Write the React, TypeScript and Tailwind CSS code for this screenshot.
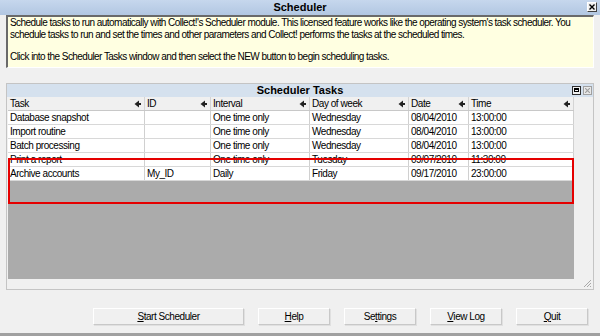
import React from 'react';

const columns = [
  { title: 'Task', w: 'w-[137px]' },
  { title: 'ID', w: 'w-[66px]' },
  { title: 'Interval', w: 'w-[99px]' },
  { title: 'Day of week', w: 'w-[99px]' },
  { title: 'Date', w: 'w-[60px]' },
  { title: 'Time', w: 'w-[105px]' },
];

const rows = [
  ['Database snapshot', '', 'One time only', 'Wednesday', '08/04/2010', '13:00:00'],
  ['Import routine', '', 'One time only', 'Wednesday', '08/04/2010', '13:00:00'],
  ['Batch processing', '', 'One time only', 'Wednesday', '08/04/2010', '13:00:00'],
  ['Print a report', '', 'One time only', 'Tuesday', '09/07/2010', '11:30:00'],
  ['Archive accounts', 'My_ID', 'Daily', 'Friday', '09/17/2010', '23:00:00'],
];

function SortArrow() {
  return (
    <svg width="9" height="8" viewBox="0 0 9 8" className="shrink-0">
      <polygon points="6,0.5 6,7.5 1.5,4" fill="#222" />
      <rect x="6" y="3" width="2" height="2" fill="#222" />
    </svg>
  );
}

function Btn({ children, w = 'w-[72px]' }: { children: React.ReactNode; w?: string }) {
  return (
    <button
      className={`${w} h-[17px] flex items-center justify-center bg-[#f0f0f0] border border-t-white border-l-white border-r-[#c8c8c8] border-b-[#c8c8c8] shadow-[1px_1px_0_#e0e0e0] leading-none`}
    >
      {children}
    </button>
  );
}

export default function App() {
  return (
    <div className="relative w-[600px] h-[336px] flex flex-col bg-[#f0f0f0] text-black text-[10px] tracking-[-0.45px] font-['Liberation_Sans',Arial,sans-serif] overflow-hidden">
      {/* title bar */}
      <div className="relative h-[15px] shrink-0 flex items-center justify-center bg-gradient-to-b from-[#c6d7ed] to-[#b2c7e2]">
        <span className="font-bold text-[11px] leading-none tracking-normal">Scheduler</span>
        <div className="absolute right-[3px] top-[2px] w-[10px] h-[10px] bg-[#f0f0f0] border border-t-white border-l-white border-r-[#404040] border-b-[#404040] flex items-center justify-center">
          <svg width="6" height="6" viewBox="0 0 6 6">
            <path d="M0.5 0.5 L5.5 5.5 M5.5 0.5 L0.5 5.5" stroke="#000" strokeWidth="1.4" />
          </svg>
        </div>
      </div>

      {/* info box */}
      <div className="mx-[6px] h-[53px] shrink-0 bg-[#ffffe1] border-t-2 border-l-2 border-t-[#6a6a6a] border-l-[#6a6a6a] border-r border-b border-r-white border-b-white pl-[2px] pt-0 leading-[12px] whitespace-nowrap tracking-[-0.55px]">
        <p>
          Schedule tasks to run automatically with Collect!'s Scheduler module. This licensed feature works like the operating system's task scheduler. You
          <br />
          schedule tasks to run and set the times and other parameters and Collect! performs the tasks at the scheduled times.
        </p>
        <p className="mt-[10px]">Click into the Scheduler Tasks window and then select the NEW button to begin scheduling tasks.</p>
      </div>

      {/* scheduler tasks panel */}
      <div className="mt-[15px] mx-[6px] h-[207px] shrink-0 border border-[#c4c4c4] flex flex-col">
        <div className="relative h-[13px] shrink-0 bg-[#d5e1ee] flex items-center justify-center">
          <span className="font-bold text-[11px] leading-none tracking-normal">Scheduler Tasks</span>
          <div className="absolute right-[1px] top-[2px] flex gap-[2px]">
            <div className="w-[9px] h-[9px] border border-[#303030] bg-[#f0f0f0] flex items-start justify-center">
              <div className="mt-[1px] w-[5px] h-[4px] border border-t-2 border-[#000]" />
            </div>
            <div className="w-[9px] h-[9px] border border-[#a0a0a0] bg-[#e8e8e8] flex items-center justify-center">
              <svg width="5" height="5" viewBox="0 0 5 5">
                <path d="M0 0 L5 5 M5 0 L0 5" stroke="#a0a0a0" strokeWidth="1.2" />
              </svg>
            </div>
          </div>
        </div>

        <div className="flex flex-1">
          <div className="ml-[1px] w-[566px] flex flex-col">
            {/* header */}
            <div className="flex h-[14px] shrink-0 bg-[#f0f0f0] border-b border-[#c8c8c8]">
              {columns.map((c) => (
                <div key={c.title} className={`${c.w} flex items-center justify-between pl-[2px] pr-[2px] border-r border-[#d4d4d4]`}>
                  <span className="leading-none">{c.title}</span>
                  <SortArrow />
                </div>
              ))}
            </div>
            {/* rows */}
            {rows.map((r, i) => (
              <div key={i} className="flex h-[14px] shrink-0 bg-white border-b border-[#d8d8d8]">
                {r.map((v, j) => (
                  <div key={j} className={`${columns[j].w} flex items-center pl-[2px] border-r border-[#d0d0d0] overflow-hidden whitespace-nowrap`}>
                    <span className="leading-none">{v}</span>
                  </div>
                ))}
              </div>
            ))}
            <div className="h-[98px] shrink-0 bg-[#ababab]" />
            <div className="flex-1" />
          </div>
          <div className="flex-1 flex items-end justify-end">
            <svg width="9" height="9" viewBox="0 0 9 9" className="mb-[1px] mr-[1px]">
              <path d="M8 1 L1 8 M8 4 L4 8 M8 7 L7 8" stroke="#a8a8a8" strokeWidth="1" />
            </svg>
          </div>
        </div>
      </div>

      {/* buttons */}
      <div className="mt-[18px] h-[17px] shrink-0 flex justify-end gap-[14px] pr-[12px]">
        <Btn w="w-[151px]">
          <span><u>S</u>tart Scheduler</span>
        </Btn>
        <Btn>
          <span><u>H</u>elp</span>
        </Btn>
        <Btn>
          <span>Se<u>t</u>tings</span>
        </Btn>
        <Btn>
          <span><u>V</u>iew Log</span>
        </Btn>
        <Btn>
          <span><u>Q</u>uit</span>
        </Btn>
      </div>

      <div className="mt-auto h-[3px] shrink-0 bg-[#a0a0a0]" />

      {/* annotation highlight */}
      <div className="absolute left-[8px] top-[158px] w-[566px] h-[46px] border-2 border-[#e50000] pointer-events-none" />
    </div>
  );
}
